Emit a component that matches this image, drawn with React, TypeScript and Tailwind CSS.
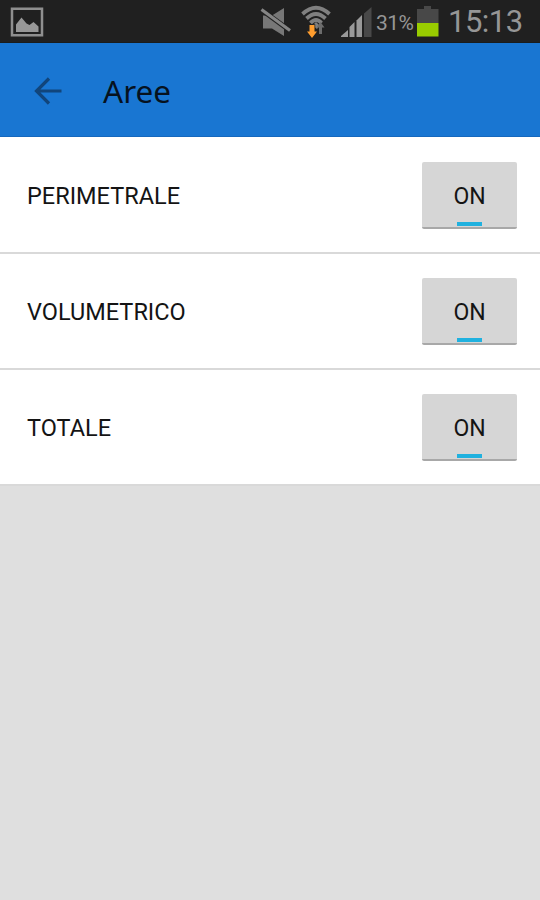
import { useState } from "react"

const areas = ["PERIMETRALE", "VOLUMETRICO", "TOTALE"]

function PictureIcon() {
  return (
    <svg width="34" height="30" viewBox="0 0 34 30" fill="none">
      <rect x="2" y="1.750" width="30" height="26.500" stroke="#8f8f8f" strokeWidth="2.500" />
      <path d="M6 25V17.500l5.500-7 5 6 3 1.500 4-3 5 4.500V25Z" fill="#979797" />
    </svg>
  )
}

function MuteIcon() {
  return (
    <svg width="32" height="30" viewBox="0 0 32 30">
      <path d="M3 8.500h9L24 1v28L12 21.500H3Z" fill="#777" />
      <path d="M1 2.500 30.500 24" stroke="#202020" strokeWidth="5" />
      <path d="M1.500 2.500 30 23.500" stroke="#858585" strokeWidth="3.200" />
    </svg>
  )
}

function WifiIcon() {
  return (
    <svg width="32" height="34" viewBox="0 0 32 34" fill="none">
      <g stroke="#808080" strokeWidth="3.800">
        <path d="M2.500 9Q16 -3.500 29.500 9" />
        <path d="M6.500 13.500Q16 4.500 25.500 13.500" />
        <path d="M10.500 18Q16 12 21.500 18" />
      </g>
      <path d="M12.500 20.500 16 17l3.500 3.500L17 24Z" fill="#808080" />
      <path d="m20.500 17 4 5.500h-2.500V29h-3v-6.500h-2.500Z" fill="#6c6c6c" />
      <path d="M9.500 20h5v6.500H17l-5 6.500-5-6.500h2.500Z" fill="#ff9d2e" stroke="#202020" strokeWidth="1.500" paintOrder="stroke" />
    </svg>
  )
}

function SignalIcon() {
  return (
    <svg width="32" height="32" viewBox="0 0 32 32">
      <path d="M1 31v-1l7-6v7Z" fill="#999" />
      <path d="M9.500 31V21l5-5v15Z" fill="#999" />
      <path d="M16.500 31V14.500L22 9v22Z" fill="#999" />
      <path d="M24 31V7.500L31.500 1v30Z" fill="#484848" />
    </svg>
  )
}

function BatteryIcon() {
  return (
    <svg width="22" height="31" viewBox="0 0 22 31">
      <path d="M0 3h7V0h7v3h7.500v14H0Z" fill="#484848" />
      <path d="M0 17h21.500v13.500H0Z" fill="#99cc00" />
    </svg>
  )
}

function StatusBar() {
  return (
    <div className="flex h-[43px] items-start border-b border-[#191c1d] bg-[#202020] text-[#969696]">
      <div className="ml-2.5 mt-[7px]">
        <PictureIcon />
      </div>
      <div className="ml-auto flex items-start">
        <div className="mt-[7px]">
          <MuteIcon />
        </div>
        <div className="ml-2 mt-[5px]">
          <WifiIcon />
        </div>
        <div className="ml-2 mt-[6px]">
          <SignalIcon />
        </div>
        <span className="ml-1 mt-[11px] w-[41px] whitespace-nowrap text-[21px] leading-6 tracking-[-0.5px]">31%</span>
        <div className="mt-[6px]">
          <BatteryIcon />
        </div>
        <span className="ml-[9px] w-[92px] whitespace-nowrap text-[31px] leading-[43px] tracking-[-0.5px]">15:13</span>
      </div>
    </div>
  )
}

function AreaRow({ name }: { name: string }) {
  const [on, setOn] = useState(true)

  return (
    <li className="flex h-[116px] items-center justify-between border-b-2 border-[#d9d9d9] bg-white pl-[27px] pr-[23px]">
      <span className="mt-0.5 text-[23.5px] leading-7">{name}</span>
      <button
        type="button"
        aria-pressed={on}
        onClick={() => setOn(!on)}
        className="mt-px flex h-[67px] w-[95px] flex-col items-center rounded-[2px] border-b-2 border-[#a8a8a8] bg-[#d6d6d6] pt-[21px]"
      >
        <span className="text-[23px] leading-7">{on ? "ON" : "OFF"}</span>
        <span className={`mt-[11px] h-1 w-[25px] ${on ? "bg-[#20b1df]" : "bg-[#b0b0b0]"}`} />
      </button>
    </li>
  )
}

export default function App() {
  return (
    <div className="h-[900px] w-[540px] overflow-hidden bg-[#dfdfdf] font-['Roboto',sans-serif] text-[#141414]">
      <StatusBar />
      <header className="flex h-[94px] items-center border-b border-[#1668bd] bg-[#1976d2]">
        <svg className="ml-[34px] mt-0.5" width="29" height="28" viewBox="0 0 29 28" fill="none" stroke="#11457b" strokeWidth="3.200">
          <path d="M15 1.500 2.500 14 15 26.500M2.500 14H27.500" />
        </svg>
        <h1 className="ml-[40px] mt-[3px] font-['Noto_Sans',sans-serif] text-[31.5px] leading-10 text-[#06121f]">Aree</h1>
      </header>
      <ul className="bg-white pt-px">
        {areas.map((area) => (
          <AreaRow key={area} name={area} />
        ))}
      </ul>
    </div>
  )
}
